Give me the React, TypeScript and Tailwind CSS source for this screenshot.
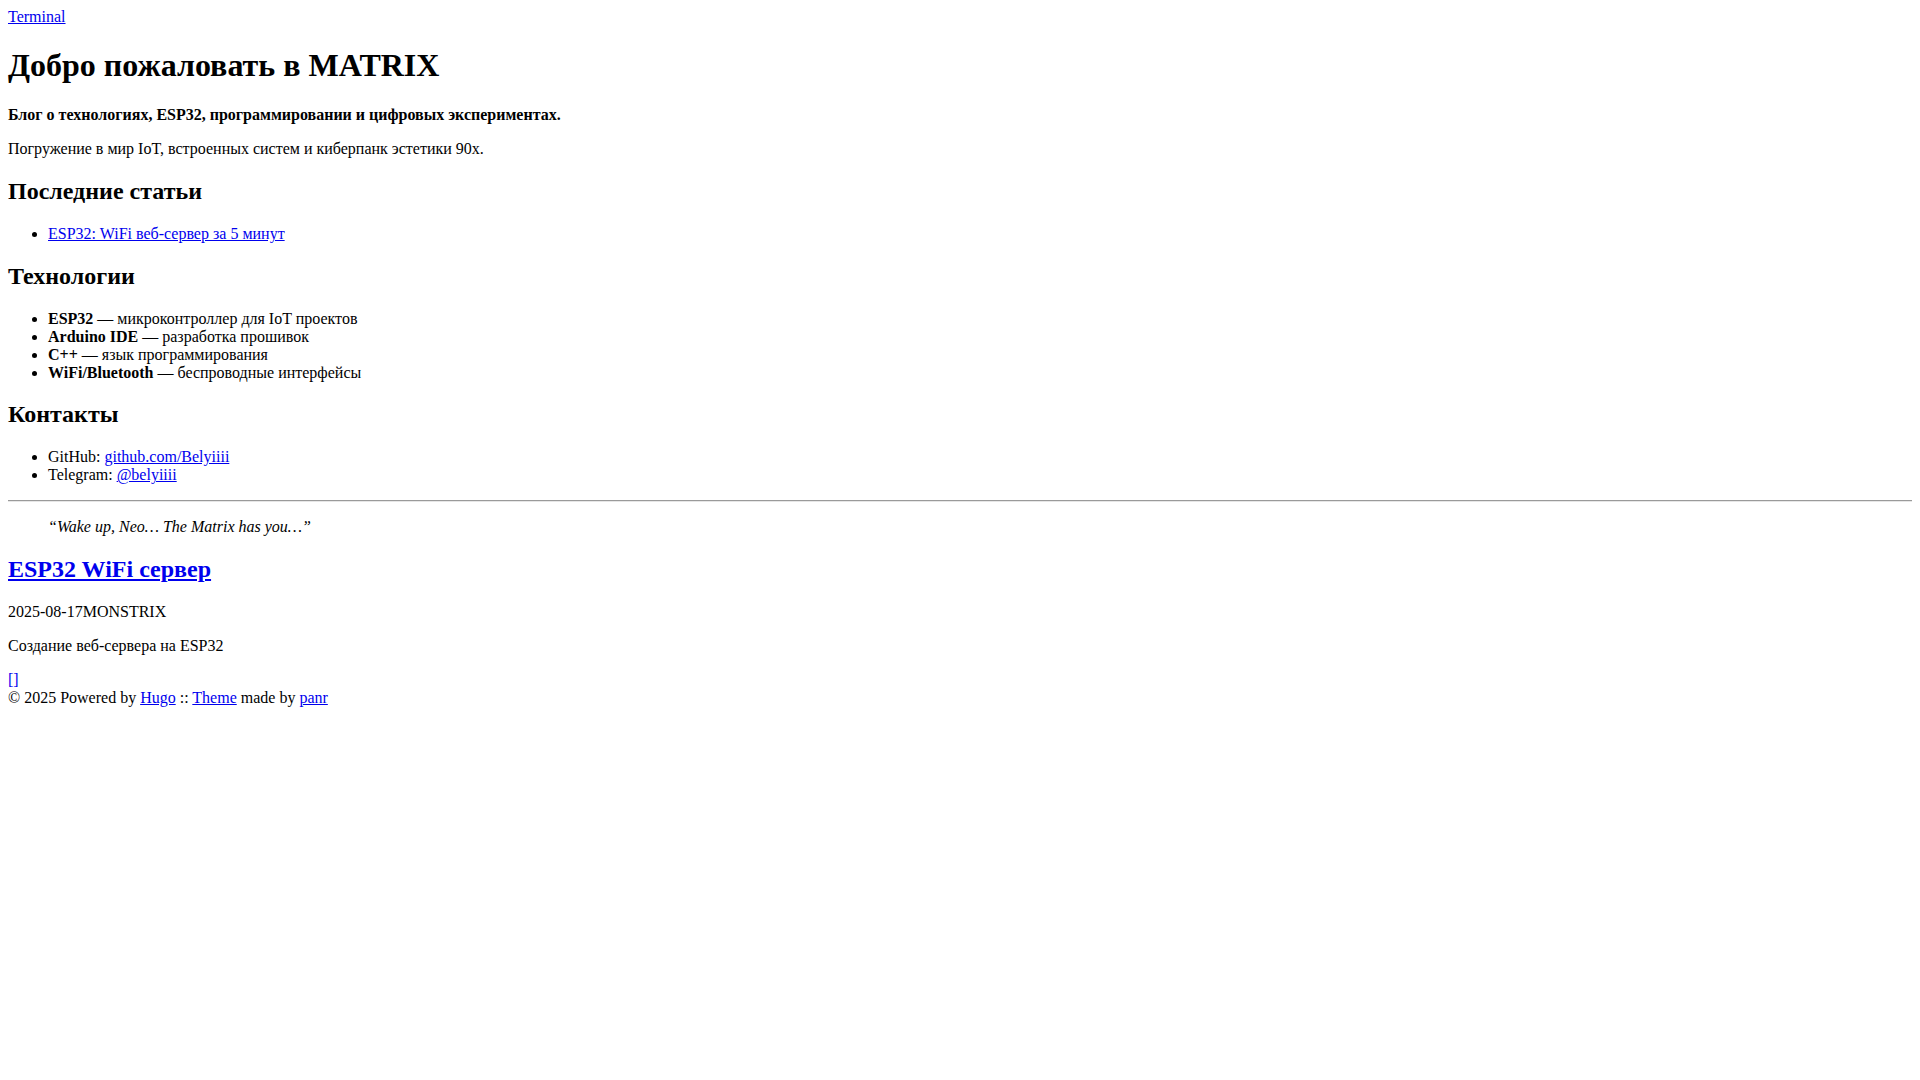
const link = 'text-[#0000ee] underline';

const techs = [
  { name: 'ESP32', text: 'микроконтроллер для IoT проектов' },
  { name: 'Arduino IDE', text: 'разработка прошивок' },
  { name: 'C++', text: 'язык программирования' },
  { name: 'WiFi/Bluetooth', text: 'беспроводные интерфейсы' },
];

export default function App() {
  return (
    <div className="min-h-screen bg-white p-2 font-['Liberation_Serif','Times_New_Roman',serif] text-[16px] leading-[normal] text-black">
      <div>
        <a href="#" className={link}>Terminal</a>
      </div>

      <h1 className="my-[0.67em] text-[32px] font-bold">Добро пожаловать в MATRIX</h1>

      <p className="my-4">
        <strong className="font-bold">Блог о технологиях, ESP32, программировании и цифровых экспериментах.</strong>
      </p>
      <p className="my-4">Погружение в мир IoT, встроенных систем и киберпанк эстетики 90х.</p>

      <h2 className="my-[0.83em] text-[24px] font-bold">Последние статьи</h2>
      <ul className="my-4 list-disc pl-10">
        <li>
          <a href="#" className={link}>ESP32: WiFi веб-сервер за 5 минут</a>
        </li>
      </ul>

      <h2 className="my-[0.83em] text-[24px] font-bold">Технологии</h2>
      <ul className="my-4 list-disc pl-10">
        {techs.map((t) => (
          <li key={t.name}>
            <strong className="font-bold">{t.name}</strong> — {t.text}
          </li>
        ))}
      </ul>

      <h2 className="my-[0.83em] text-[24px] font-bold">Контакты</h2>
      <ul className="my-4 list-disc pl-10">
        <li>
          GitHub: <a href="#" className={link}>github.com/Belyiiii</a>
        </li>
        <li>
          Telegram: <a href="#" className={link}>@belyiiii</a>
        </li>
      </ul>

      <hr className="my-2 h-0 border-0 border-t border-b border-t-[#9a9a9a] border-b-[#e6e6e6]" />

      <blockquote className="mx-10 my-4">
        <p className="my-4">
          <em className="italic">“Wake up, Neo… The Matrix has you…”</em>
        </p>
      </blockquote>

      <article>
        <h2 className="my-[0.83em] text-[24px] font-bold">
          <a href="#" className={link}>ESP32 WiFi сервер</a>
        </h2>
        <p className="my-4">
          <span>2025-08-17</span>
          <span>MONSTRIX</span>
        </p>
        <p className="my-4">Создание веб-сервера на ESP32</p>
      </article>

      <footer>
        <div>
          <a href="#" className="text-[#0000ee]">[]</a>
        </div>
        <div>
          © 2025 Powered by <a href="#" className={link}>Hugo</a> :: <a href="#" className={link}>Theme</a> made by{' '}
          <a href="#" className={link}>panr</a>
        </div>
      </footer>
    </div>
  );
}
